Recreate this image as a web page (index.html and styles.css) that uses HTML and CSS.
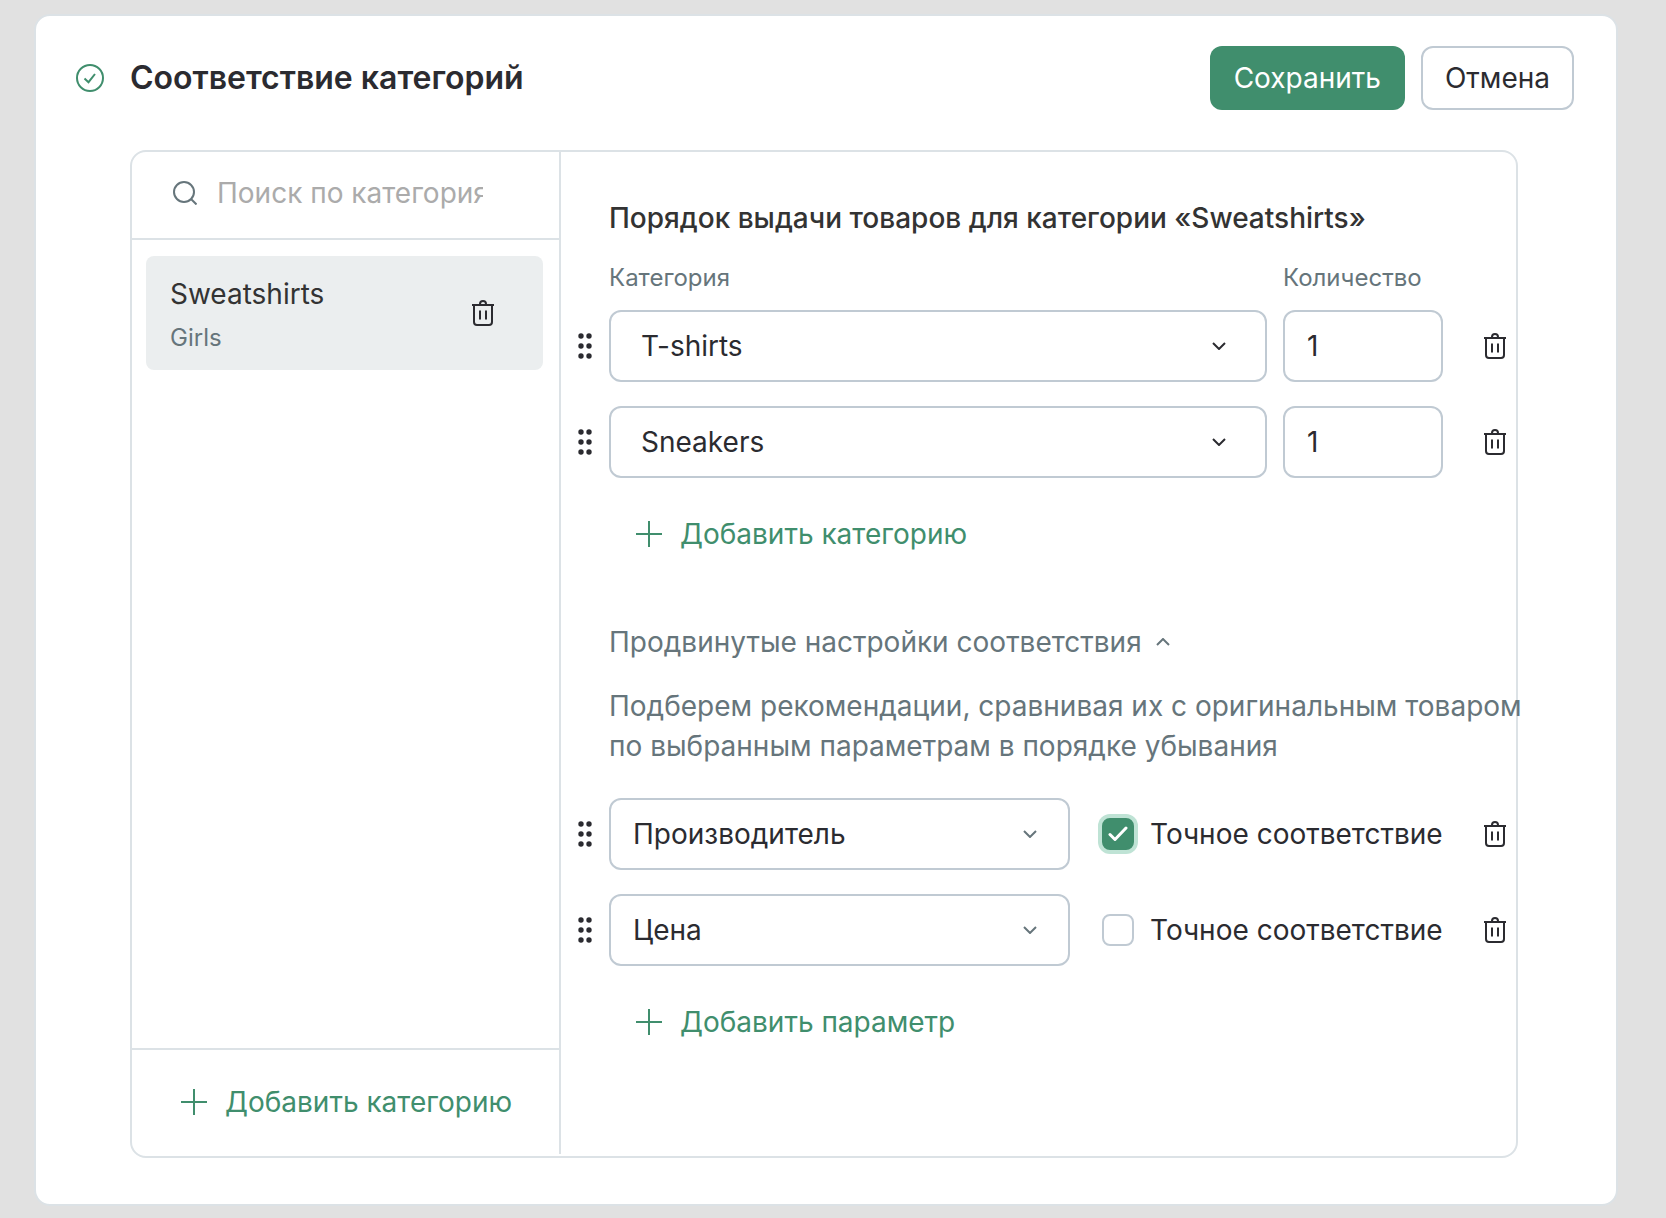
FILE: index.html
```html
<!DOCTYPE html>
<html lang="ru">
<head>
<meta charset="utf-8">
<meta name="viewport" content="width=device-width, initial-scale=1">
<title>Соответствие категорий</title>
<link rel="stylesheet" href="styles.css">
</head>
<body>
<svg class="sprite" aria-hidden="true">
  <symbol id="trash" viewBox="0 0 22 26">
    <path d="M0 5h22M2 5v17a3 3 0 0 0 3 3h12a3 3 0 0 0 3-3V5M8 5V4a3 3 0 0 1 6 0v1M8 10.500v9M14 10.500v9" fill="none" stroke="currentColor" stroke-width="2"/>
  </symbol>
  <symbol id="plus" viewBox="0 0 26 26">
    <path d="M0 13h26M13 0v26" fill="none" stroke="currentColor" stroke-width="2"/>
  </symbol>
  <symbol id="chevron" viewBox="0 0 14 8">
    <path d="M1 1l6 6 6-6" fill="none" stroke="currentColor" stroke-width="2"/>
  </symbol>
  <symbol id="chevron-up" viewBox="0 0 14 8">
    <path d="M1 7l6-6 6 6" fill="none" stroke="currentColor" stroke-width="2"/>
  </symbol>
  <symbol id="grip" viewBox="0 0 14 26">
    <g fill="currentColor"><circle cx="3" cy="3" r="2.700"/><circle cx="11" cy="3" r="2.700"/><circle cx="3" cy="13" r="2.700"/><circle cx="11" cy="13" r="2.700"/><circle cx="3" cy="23" r="2.700"/><circle cx="11" cy="23" r="2.700"/></g>
  </symbol>
</svg>

<main class="card">
  <header class="card-header">
    <svg class="status" viewBox="0 0 28 28" aria-hidden="true"><circle cx="14" cy="14" r="13" fill="none" stroke="currentColor" stroke-width="2"/><path d="M8.500 14.500l4 3.700 6.500-8.200" fill="none" stroke="currentColor" stroke-width="2"/></svg>
    <h1 class="title">Соответствие категорий</h1>
    <button type="button" class="button button-primary">Сохранить</button>
    <button type="button" class="button button-outline">Отмена</button>
  </header>

  <div class="panel">
    <aside class="sidebar">
      <label class="search">
        <svg class="search-icon" viewBox="0 0 24 24" aria-hidden="true"><circle cx="11" cy="11" r="10" fill="none" stroke="currentColor" stroke-width="2"/><path d="M18 18l5.500 5.500" stroke="currentColor" stroke-width="2"/></svg>
        <input class="search-input" type="text" placeholder="Поиск по категориям" aria-label="Поиск по категориям">
      </label>
      <ul class="category-list">
        <li class="category">
          <div class="category-text">
            <span class="category-name">Sweatshirts</span>
            <span class="category-parent">Girls</span>
          </div>
          <button type="button" class="icon-button" aria-label="Удалить Sweatshirts"><svg class="trash"><use href="#trash"/></svg></button>
        </li>
      </ul>
      <div class="sidebar-footer">
        <button type="button" class="add"><svg class="plus"><use href="#plus"/></svg>Добавить категорию</button>
      </div>
    </aside>

    <section class="content">
      <h2 class="subtitle">Порядок выдачи товаров для категории «Sweatshirts»</h2>
      <div class="rows">
        <div class="row row-labels">
          <span class="label" id="label-category">Категория</span>
          <span class="label" id="label-count">Количество</span>
        </div>
        <div class="row">
          <svg class="grip"><use href="#grip"/></svg>
          <div class="select select-wide">
            <select class="field" aria-labelledby="label-category"><option>T-shirts</option></select>
            <svg class="chevron"><use href="#chevron"/></svg>
          </div>
          <input class="field field-count" type="text" inputmode="numeric" value="1" aria-labelledby="label-count">
          <button type="button" class="icon-button" aria-label="Удалить T-shirts"><svg class="trash"><use href="#trash"/></svg></button>
        </div>
        <div class="row">
          <svg class="grip"><use href="#grip"/></svg>
          <div class="select select-wide">
            <select class="field" aria-labelledby="label-category"><option>Sneakers</option></select>
            <svg class="chevron"><use href="#chevron"/></svg>
          </div>
          <input class="field field-count" type="text" inputmode="numeric" value="1" aria-labelledby="label-count">
          <button type="button" class="icon-button" aria-label="Удалить Sneakers"><svg class="trash"><use href="#trash"/></svg></button>
        </div>
      </div>
      <button type="button" class="add"><svg class="plus"><use href="#plus"/></svg>Добавить категорию</button>

      <button type="button" class="toggle" aria-expanded="true">Продвинутые настройки соответствия<svg class="chevron-up"><use href="#chevron-up"/></svg></button>
      <p class="hint">Подберем рекомендации, сравнивая их с оригинальным товаром<br>по выбранным параметрам в порядке убывания</p>

      <div class="rows">
        <div class="row row-params">
          <svg class="grip"><use href="#grip"/></svg>
          <div class="select">
            <select class="field" aria-label="Параметр"><option>Производитель</option></select>
            <svg class="chevron"><use href="#chevron"/></svg>
          </div>
          <label class="check"><input class="checkbox checkbox-active" type="checkbox" checked>Точное соответствие</label>
          <button type="button" class="icon-button" aria-label="Удалить Производитель"><svg class="trash"><use href="#trash"/></svg></button>
        </div>
        <div class="row row-params">
          <svg class="grip"><use href="#grip"/></svg>
          <div class="select">
            <select class="field" aria-label="Параметр"><option>Цена</option></select>
            <svg class="chevron"><use href="#chevron"/></svg>
          </div>
          <label class="check"><input class="checkbox" type="checkbox">Точное соответствие</label>
          <button type="button" class="icon-button" aria-label="Удалить Цена"><svg class="trash"><use href="#trash"/></svg></button>
        </div>
      </div>
      <button type="button" class="add"><svg class="plus"><use href="#plus"/></svg>Добавить параметр</button>
    </section>
  </div>
</main>
</body>
</html>
```
FILE: styles.css
```css
:root {
  --green: #408e6d;
  --ink: #2b2b30;
  --text: #333;
  --muted: #66757b;
  --line: #dce2e6;
  --field-line: #c0cad3;
}

*,
*::before,
*::after {
  box-sizing: border-box;
}

body {
  margin: 0;
  padding: 14px 48px 12px 34px;
  background: #e1e1e1;
  color: var(--ink);
  font: 400 28px/40px Inter, "Noto Sans", sans-serif;
}

button,
input,
select {
  font: inherit;
  color: inherit;
}

button {
  padding: 0;
  border: 0;
  background: none;
  cursor: pointer;
}

.sprite {
  display: none;
}

.card {
  padding: 30px 42px 46px 40px;
  border: 2px solid var(--line);
  border-radius: 16px;
  background: #fff;
}

.card-header {
  display: flex;
  align-items: center;
  gap: 16px;
}

.status {
  width: 28px;
  height: 28px;
  color: var(--green);
}

.title {
  flex: 1;
  margin: 0 0 0 10px;
  font-size: 32px;
  font-weight: 600;
  line-height: 40px;
}

.button {
  height: 64px;
  padding: 0 24px;
  border-radius: 12px;
}

.button-primary {
  background: var(--green);
  color: #fff;
}

.button-outline {
  padding: 0 22px;
  border: 2px solid var(--field-line);
  background: #fff;
}

.panel {
  display: flex;
  margin: 40px 56px 0 54px;
  border: 2px solid var(--line);
  border-radius: 16px;
}

.sidebar {
  display: flex;
  flex: none;
  flex-direction: column;
  width: 429px;
  margin-bottom: 2px;
  border-right: 2px solid var(--line);
}

.search {
  display: flex;
  align-items: center;
  gap: 20px;
  height: 88px;
  padding: 0 76px 4px 41px;
  border-bottom: 2px solid var(--line);
}

.search-icon {
  flex: none;
  width: 24px;
  height: 24px;
  color: var(--muted);
}

.search-input {
  flex: 1;
  min-width: 0;
  padding: 0;
  border: 0;
  outline: 0;
  background: none;
}

.search-input::placeholder {
  color: #ababab;
}

.category-list {
  flex: 1;
  margin: 0;
  padding: 16px 16px 0 14px;
  list-style: none;
}

.category {
  display: flex;
  align-items: center;
  justify-content: space-between;
  height: 114px;
  padding: 0 49px 0 24px;
  border-radius: 8px;
  background: #ebeeef;
}

.category-text {
  display: flex;
  flex-direction: column;
  gap: 4px;
  padding-top: 6px;
}

.category-name {
  color: var(--text);
}

.category-parent,
.label {
  color: var(--muted);
  font-size: 24px;
}

.icon-button {
  display: flex;
}

.trash {
  width: 22px;
  height: 26px;
}

.sidebar-footer {
  height: 106px;
  padding: 32px 0 0 49px;
  border-top: 2px solid var(--line);
}

.add {
  display: flex;
  align-items: center;
  gap: 18px;
  color: var(--green);
}

.plus {
  width: 26px;
  height: 26px;
}

.content {
  flex: 1;
  min-width: 0;
  padding: 46px 10px 114px 16px;
}

.subtitle {
  margin: 0 0 20px 32px;
  color: var(--text);
  font-size: 28px;
  font-weight: 500;
  line-height: 40px;
}

.rows {
  display: grid;
  gap: 24px;
}

.row {
  display: grid;
  grid-template-columns: 16px minmax(0, 1fr) 160px 47px;
  align-items: center;
  column-gap: 16px;
}

.row-params {
  grid-template-columns: 16px minmax(0, 1fr) 341px 47px;
}

.row-labels {
  margin-bottom: -12px;
}

.row-labels .label:first-child {
  grid-column: 2;
}

.row .icon-button {
  justify-self: end;
}

.row-params .select {
  margin-right: 16px;
}

.grip {
  justify-self: center;
  width: 14px;
  height: 26px;
}

.select {
  position: relative;
}

.field {
  display: block;
  width: 100%;
  height: 72px;
  padding: 0 22px;
  border: 2px solid var(--field-line);
  border-radius: 12px;
  outline: 0;
  background: #fff;
  appearance: none;
}

.select-wide .field {
  padding-left: 30px;
}

.chevron {
  position: absolute;
  top: 32px;
  right: 33px;
  width: 14px;
  height: 8px;
  color: var(--muted);
  pointer-events: none;
}

.select-wide .chevron {
  right: 41px;
  color: var(--ink);
}

.content > .add {
  margin: 36px 0 0 59px;
}

.toggle {
  display: flex;
  align-items: center;
  gap: 14px;
  margin: 68px 0 24px 32px;
  color: var(--muted);
}

.chevron-up {
  width: 14px;
  height: 8px;
}

.hint {
  margin: 0 0 32px 32px;
  color: var(--muted);
  white-space: nowrap;
}

.check {
  display: flex;
  align-items: center;
  gap: 16px;
  white-space: nowrap;
}

.checkbox {
  flex: none;
  width: 32px;
  height: 32px;
  margin: 0;
  border: 2px solid var(--field-line);
  border-radius: 8px;
  background: #fff;
  appearance: none;
}

.checkbox:checked {
  border-color: var(--green);
  background: var(--green) url("data:image/svg+xml,%3Csvg xmlns='http://www.w3.org/2000/svg' viewBox='0 0 20 16'%3E%3Cpath d='M2 8.500l5 5L18 2' fill='none' stroke='white' stroke-width='3' stroke-linecap='round' stroke-linejoin='round'/%3E%3C/svg%3E") center / 20px 16px no-repeat;
}

.checkbox-active {
  box-shadow: 0 0 0 4px #bfe3d5;
}
```
